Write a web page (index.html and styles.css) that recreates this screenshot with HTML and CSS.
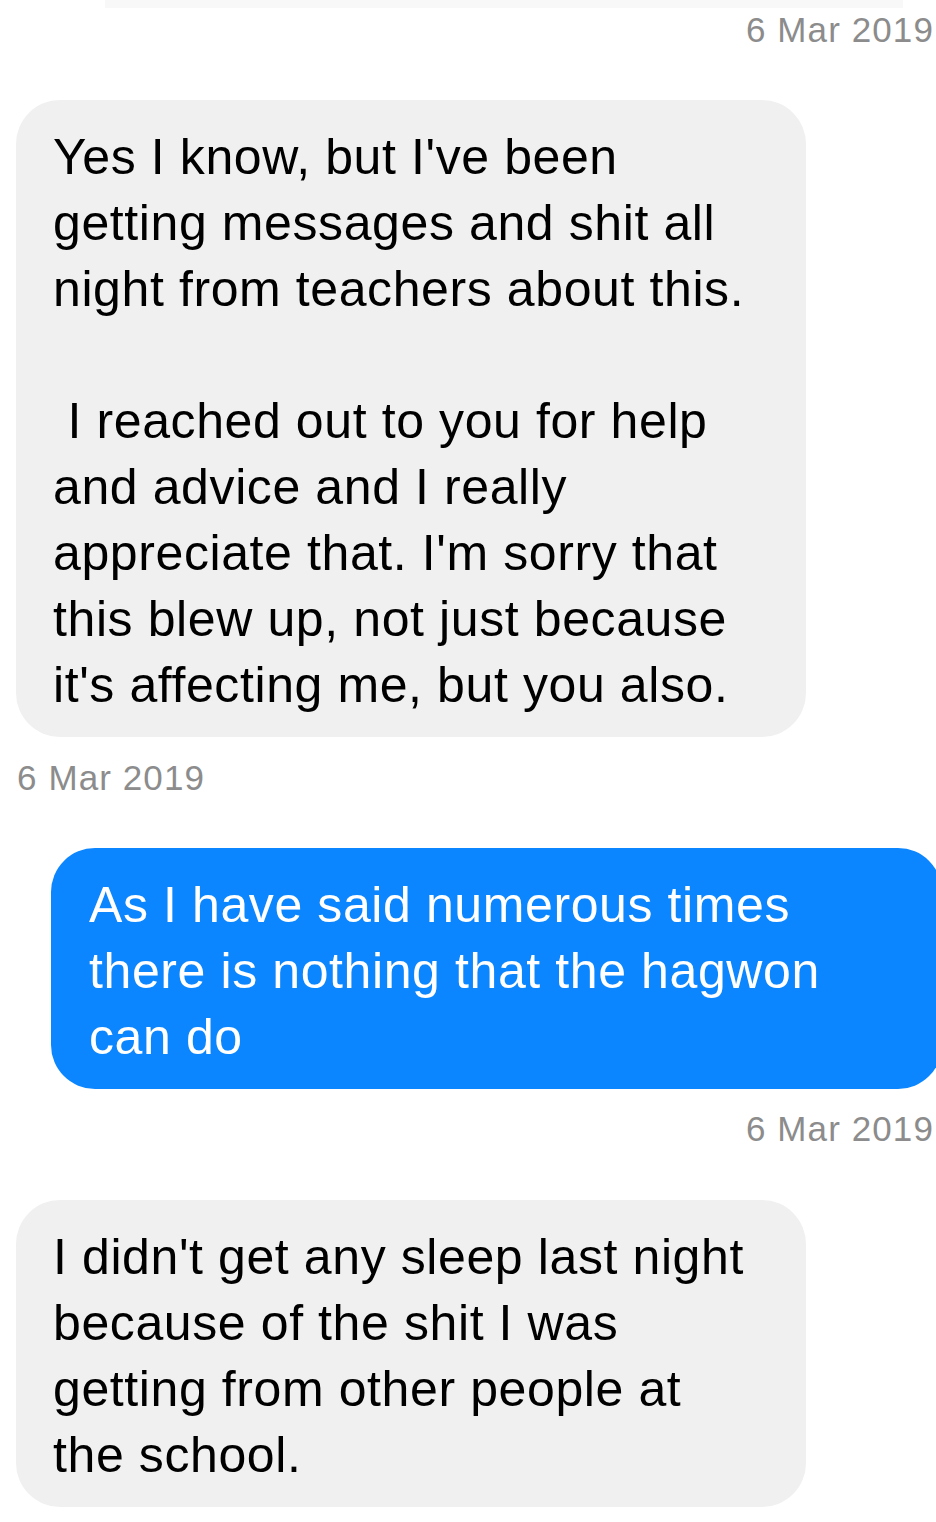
FILE: index.html
```html
<!DOCTYPE html>
<html lang="en">
  <head>
    <meta charset="UTF-8" />
    <meta name="viewport" content="width=device-width, initial-scale=1.0" />
    <title>Messages</title>
    <link rel="stylesheet" href="styles.css">
  </head>
  <body>
    <div class="thread">
      <div class="prev-edge"></div>

      <div class="stamp stamp-right">6 Mar 2019</div>
      <div class="bubble received">
        <p>Yes I know, but I've been<br>getting messages and shit all<br>night from teachers about this.</p>
        <p class="gap">&nbsp;I reached out to you for help<br>and advice and I really<br>appreciate that. I'm sorry that<br>this blew up, not just because<br>it's affecting me, but you also.</p>
      </div>

      <div class="stamp stamp-left">6 Mar 2019</div>
      <div class="bubble sent">
        <p>As I have said numerous times<br>there is nothing that the hagwon<br>can do</p>
      </div>

      <div class="stamp stamp-right">6 Mar 2019</div>
      <div class="bubble received">
        <p>I didn't get any sleep last night<br>because of the shit I was<br>getting from other people at<br>the school.</p>
      </div>
    </div>
  </body>
</html>
```

FILE: styles.css
```css
body {
  margin: 0;
  padding: 0;
  background: #fff;
  font-family: "Liberation Sans", Arial, sans-serif;
  overflow-x: hidden;
}
.thread {
  display: flex;
  flex-direction: column;
  width: 936px;
}
.prev-edge {
  height: 8px;
  margin: 0 33px 0 105px;
  background: #f8f8f8;
}
.stamp {
  font-size: 35px;
  line-height: 40px;
  letter-spacing: 1.1px;
  color: #8c8c8c;
}
.stamp-right {
  text-align: right;
  padding-right: 2px;
  margin-top: 2px;
  margin-bottom: 50px;
}
.stamp-left {
  padding-left: 17px;
  margin-top: 21px;
  margin-bottom: 50px;
}
.bubble + .stamp-right {
  margin-top: 20px;
  margin-bottom: 51px;
}
.bubble {
  font-size: 50px;
  line-height: 66px;
  letter-spacing: 0.6px;
  white-space: nowrap;
  border-radius: 44px;
  padding: 24px 37px 19px 37px;
}
.bubble p {
  margin: 0;
}
.bubble p.gap {
  margin-top: 66px;
}
.received {
  width: 716px;
  margin-left: 16px;
  background: #f0f0f0;
  color: #000;
}
.sent {
  margin-left: 51px;
  margin-right: -6px;
  padding-left: 38px;
  padding-right: 90px;
  background: #0b86fe;
  color: #fff;
}
```
